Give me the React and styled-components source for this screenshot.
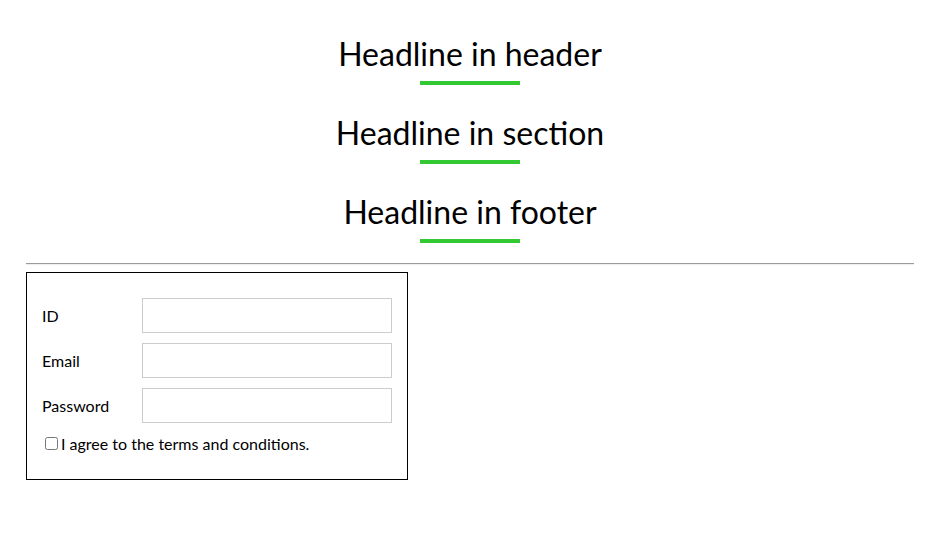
import React from "react";
import styled, { createGlobalStyle } from "styled-components";

const GlobalStyle = createGlobalStyle`
  html, body {
    margin: 0;
    padding: 0;
    background: #fff;
  }
  body {
    font-family: Lato, "Noto Sans", sans-serif;
    color: #000;
  }
`;

const App = () => {
  return (
    <>
      <GlobalStyle />
      <Page>
        <Headlines>
          <header>
            <Title>Headline in header</Title>
          </header>
          <section>
            <Title>Headline in section</Title>
          </section>
          <footer>
            <Title>Headline in footer</Title>
          </footer>
        </Headlines>
        <Rule />
        <Form>
          <Row>
            <Label htmlFor="id">ID</Label>
            <Input id="id" type="text" />
          </Row>
          <Row>
            <Label htmlFor="email">Email</Label>
            <Input id="email" type="email" />
          </Row>
          <Row>
            <Label htmlFor="password">Password</Label>
            <Input id="password" type="password" />
          </Row>
          <Agree>
            <Check type="checkbox" />
            I agree to the terms and conditions.
          </Agree>
        </Form>
      </Page>
    </>
  );
};

export default App;

const Page = styled.div`
  padding: 36px 26px 0;
`;

const Headlines = styled.div`
  display: flex;
  flex-direction: column;
  gap: 30px;
`;

const Title = styled.h1`
  margin: 0;
  font-size: 32px;
  font-weight: 400;
  line-height: 36px;
  text-align: center;

  &::after {
    content: "";
    display: block;
    width: 100px;
    height: 4px;
    margin: 9px auto 0;
    background-color: #33c933;
  }
`;

const Rule = styled.hr`
  margin: 20px 0 7px;
  border: none;
  border-top: 1px solid #9a9a9a;
  border-bottom: 1px solid #eee;
`;

const Form = styled.form`
  display: flex;
  flex-direction: column;
  gap: 10px;
  width: 382px;
  box-sizing: border-box;
  padding: 25px 15px 26px;
  border: 1px solid #000;
`;

const Row = styled.div`
  display: flex;
  align-items: center;
`;

const Label = styled.label`
  width: 100px;
  font-size: 16px;
`;

const Input = styled.input`
  width: 250px;
  height: 35px;
  box-sizing: border-box;
  border: 1px solid #ccc;
  outline: none;
`;

const Agree = styled.label`
  display: flex;
  align-items: center;
  margin-top: 1px;
  padding-left: 3px;
  font-size: 16px;
`;

const Check = styled.input`
  width: 13px;
  height: 13px;
  margin: 0 3px 0 0;
`;
